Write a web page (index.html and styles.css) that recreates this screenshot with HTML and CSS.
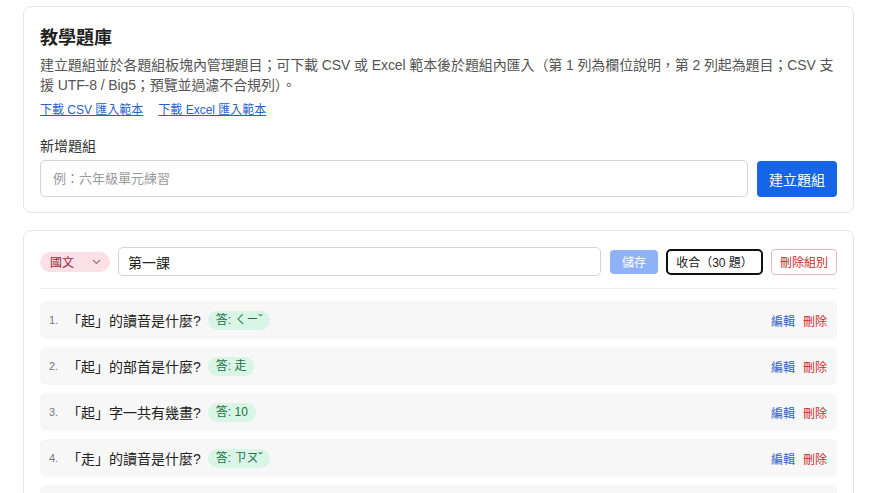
FILE: index.html
```html
<!DOCTYPE html>
<html lang="zh-Hant">
<head>
    <meta charset="UTF-8">
    <meta name="viewport" content="width=device-width, initial-scale=1.0">
    <title>教學題庫</title>
    <link rel="stylesheet" href="styles.css">
</head>

<body>
    <div class="page">
        <!-- 題庫說明與新增題組 -->
        <section class="card intro">
            <h2 class="title">教學題庫</h2>
            <p class="desc">建立題組並於各題組板塊內管理題目；可下載 CSV 或 Excel 範本後於題組內匯入（第 1 列為欄位說明，第 2 列起為題目；CSV 支援 UTF-8 / Big5；預覽並過濾不合規列）。</p>
            <div class="links">
                <a href="#">下載 CSV 匯入範本</a>
                <a href="#">下載 Excel 匯入範本</a>
            </div>
            <label class="label" for="newGroup">新增題組</label>
            <div class="new-row">
                <input type="text" id="newGroup" class="field" placeholder="例：六年級單元練習">
                <button class="btn btn-primary">建立題組</button>
            </div>
        </section>

        <!-- 題組板塊 -->
        <section class="card group">
            <div class="group-head">
                <span class="subject">國文
                    <svg width="9" height="6" viewBox="0 0 9 6"><path d="M1 1l3.5 3.5L8 1" fill="none" stroke="#b46a78" stroke-width="1.1"/></svg>
                </span>
                <input type="text" class="field field-sm" value="第一課">
                <button class="btn btn-save" disabled>儲存</button>
                <button class="btn btn-outline is-focus">收合（30 題）</button>
                <button class="btn btn-danger">刪除組別</button>
            </div>

            <ul class="q-list">
                <li class="q-item">
                    <span class="q-no">1.</span>
                    <span class="q-text">「起」的讀音是什麼?</span>
                    <span class="answer">答: ㄑㄧˇ</span>
                    <span class="actions"><a href="#" class="edit">編輯</a><a href="#" class="del">刪除</a></span>
                </li>
                <li class="q-item">
                    <span class="q-no">2.</span>
                    <span class="q-text">「起」的部首是什麼?</span>
                    <span class="answer">答: 走</span>
                    <span class="actions"><a href="#" class="edit">編輯</a><a href="#" class="del">刪除</a></span>
                </li>
                <li class="q-item">
                    <span class="q-no">3.</span>
                    <span class="q-text">「起」字一共有幾畫?</span>
                    <span class="answer">答: 10</span>
                    <span class="actions"><a href="#" class="edit">編輯</a><a href="#" class="del">刪除</a></span>
                </li>
                <li class="q-item">
                    <span class="q-no">4.</span>
                    <span class="q-text">「走」的讀音是什麼?</span>
                    <span class="answer">答: ㄗㄡˇ</span>
                    <span class="actions"><a href="#" class="edit">編輯</a><a href="#" class="del">刪除</a></span>
                </li>
                <li class="q-item">
                    <span class="q-no">5.</span>
                    <span class="q-text">「走」的部首是什麼?</span>
                    <span class="answer">答: 走</span>
                    <span class="actions"><a href="#" class="edit">編輯</a><a href="#" class="del">刪除</a></span>
                </li>
            </ul>
        </section>
    </div>
</body>
</html>
```

FILE: styles.css
```css
/* 基本設定 */
body {
    margin: 0;
    background-color: #fff;
    color: #222;
    font-family: "Liberation Sans", "Noto Sans CJK TC", sans-serif;
}

.page {
    padding: 6px 22px 0 23px;
}

.card {
    border: 1px solid #e6e6e6;
    border-radius: 8px;
    background-color: #fff;
    padding: 20px 16px 15px 16px;
    margin-bottom: 17px;
}

.title {
    margin: 0 0 6px 0;
    font-size: 18px;
    line-height: 22px;
    font-weight: bold;
    color: #222;
}

.desc {
    margin: 0 0 6px 0;
    font-size: 14px;
    line-height: 20px;
    letter-spacing: -0.1px;
    color: #555;
}

.links {
    display: flex;
    gap: 15px;
    font-size: 12px;
    line-height: 18px;
}

.links a {
    color: #2563c9;
    text-decoration: underline;
}

.label {
    display: block;
    margin-top: 17px;
    font-size: 14px;
    line-height: 20px;
    color: #333;
}

.new-row {
    display: flex;
    gap: 9px;
    margin-top: 4px;
    align-items: center;
}

.field {
    flex: 1;
    box-sizing: border-box;
    height: 37px;
    border: 1px solid #d4d4d4;
    border-radius: 5px;
    padding: 0 12px;
    font-family: inherit;
    font-size: 13px;
    color: #222;
    outline: none;
}

.field::placeholder {
    color: #9a9a9a;
}

.btn {
    box-sizing: border-box;
    font-family: inherit;
    border-radius: 4px;
    cursor: pointer;
    white-space: nowrap;
}

.btn-primary {
    height: 36px;
    padding: 0 12px;
    border: none;
    background-color: #1665e6;
    color: #fff;
    font-size: 14px;
}

/* 題組 */
.group {
    padding-top: 16px;
}

.group-head {
    display: flex;
    align-items: center;
    gap: 8px;
    padding-bottom: 12px;
    border-bottom: 1px solid #eeeeee;
}

.subject {
    display: flex;
    align-items: center;
    justify-content: space-between;
    box-sizing: border-box;
    width: 70px;
    height: 20px;
    padding: 0 9px 0 10px;
    border-radius: 10px;
    background-color: #fbe1e6;
    color: #9c1f3c;
    font-size: 12px;
}

.field-sm {
    height: 29px;
    padding: 0 9px;
    font-size: 14px;
    margin-right: 1px;
}

.btn-save {
    width: 48px;
    height: 24px;
    padding: 0;
    border: none;
    background-color: #8fb2f6;
    color: #fff;
    font-size: 12px;
}

.btn-outline {
    width: 97px;
    height: 26px;
    padding: 0;
    background-color: #fff;
    border: 1px solid #bbb;
    color: #222;
    font-size: 12px;
}

.btn-outline.is-focus {
    border: 2px solid #111;
    border-radius: 5px;
}

.btn-danger {
    width: 66px;
    height: 26px;
    padding: 0;
    background-color: #fff;
    border: 1px solid #e8b9b9;
    color: #c92a2a;
    font-size: 12px;
}

.q-list {
    list-style: none;
    margin: 12px 0 0 0;
    padding: 0;
}

.q-item {
    display: flex;
    align-items: center;
    height: 38px;
    padding: 0 10px 0 9px;
    margin-bottom: 8px;
    border-radius: 6px;
    background-color: #f7f7f7;
}

.q-no {
    width: 18px;
    font-size: 11px;
    color: #777;
}

.q-text {
    font-size: 14px;
    color: #222;
}

.answer {
    margin-left: 7px;
    padding: 0 8px;
    height: 19px;
    line-height: 19px;
    border-radius: 10px;
    background-color: #d8f5e6;
    color: #1e7048;
    font-size: 12px;
}

.actions {
    margin-left: auto;
    display: flex;
    gap: 8px;
    font-size: 12px;
}

.actions a {
    text-decoration: none;
}

.edit {
    color: #2e62c4;
}

.del {
    color: #cc2b2b;
}
```
